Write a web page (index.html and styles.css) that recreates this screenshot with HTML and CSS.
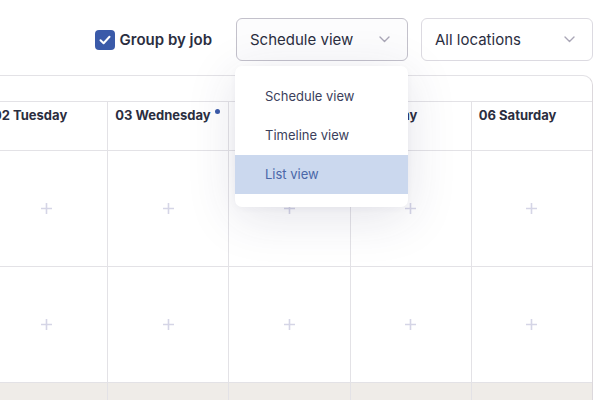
FILE: index.html
```html
<!DOCTYPE html>
<html>
<head>
<meta charset="utf-8">
<link rel="stylesheet" href="styles.css">
</head>
<body>
<div class="toolbar">
  <label class="check">
    <span class="box"><svg width="12" height="10" viewBox="0 0 12 10"><path d="M1.5 5.2 L4.6 8.2 L10.5 1.8" fill="none" stroke="#fff" stroke-width="2" stroke-linecap="round" stroke-linejoin="round"/></svg></span>
    <span class="check-text">Group by job</span>
  </label>
  <div class="select-wrap">
    <div class="select active">
      <span>Schedule view</span>
      <svg class="chev" width="11" height="7" viewBox="0 0 11 7"><path d="M1 1 L5.5 5.5 L10 1" fill="none" stroke="#a9a6b6" stroke-width="1.4" stroke-linecap="round" stroke-linejoin="round"/></svg>
    </div>
    <div class="menu">
      <div class="item">Schedule view</div>
      <div class="item">Timeline view</div>
      <div class="item selected">List view</div>
    </div>
  </div>
  <div class="select loc">
    <span>All locations</span>
    <svg class="chev" width="11" height="7" viewBox="0 0 11 7"><path d="M1 1 L5.5 5.5 L10 1" fill="none" stroke="#a9a6b6" stroke-width="1.4" stroke-linecap="round" stroke-linejoin="round"/></svg>
  </div>
</div>

<div class="calendar">
  <div class="strip"></div>
  <div class="grid">
    <div class="head">02 Tuesday</div>
    <div class="head">03 Wednesday<span class="dot"></span></div>
    <div class="head">04 Thursday</div>
    <div class="head">05 Friday</div>
    <div class="head">06 Saturday</div>

    <div class="cell"><svg class="plus" width="11" height="11" viewBox="0 0 11 11"><path d="M5.5 0 V11 M0 5.5 H11" stroke="#d5d5e6" stroke-width="1.6"/></svg></div>
    <div class="cell"><svg class="plus" width="11" height="11" viewBox="0 0 11 11"><path d="M5.5 0 V11 M0 5.5 H11" stroke="#d5d5e6" stroke-width="1.6"/></svg></div>
    <div class="cell"><svg class="plus" width="11" height="11" viewBox="0 0 11 11"><path d="M5.5 0 V11 M0 5.5 H11" stroke="#d5d5e6" stroke-width="1.6"/></svg></div>
    <div class="cell"><svg class="plus" width="11" height="11" viewBox="0 0 11 11"><path d="M5.5 0 V11 M0 5.5 H11" stroke="#d5d5e6" stroke-width="1.6"/></svg></div>
    <div class="cell"><svg class="plus" width="11" height="11" viewBox="0 0 11 11"><path d="M5.5 0 V11 M0 5.5 H11" stroke="#d5d5e6" stroke-width="1.6"/></svg></div>

    <div class="cell"><svg class="plus" width="11" height="11" viewBox="0 0 11 11"><path d="M5.5 0 V11 M0 5.5 H11" stroke="#d5d5e6" stroke-width="1.6"/></svg></div>
    <div class="cell"><svg class="plus" width="11" height="11" viewBox="0 0 11 11"><path d="M5.5 0 V11 M0 5.5 H11" stroke="#d5d5e6" stroke-width="1.6"/></svg></div>
    <div class="cell"><svg class="plus" width="11" height="11" viewBox="0 0 11 11"><path d="M5.5 0 V11 M0 5.5 H11" stroke="#d5d5e6" stroke-width="1.6"/></svg></div>
    <div class="cell"><svg class="plus" width="11" height="11" viewBox="0 0 11 11"><path d="M5.5 0 V11 M0 5.5 H11" stroke="#d5d5e6" stroke-width="1.6"/></svg></div>
    <div class="cell"><svg class="plus" width="11" height="11" viewBox="0 0 11 11"><path d="M5.5 0 V11 M0 5.5 H11" stroke="#d5d5e6" stroke-width="1.6"/></svg></div>

    <div class="foot"></div>
    <div class="foot"></div>
    <div class="foot"></div>
    <div class="foot"></div>
    <div class="foot"></div>
  </div>
</div>
</body>
</html>
```

FILE: styles.css
```css
* { box-sizing: border-box; }
html, body {
  margin: 0;
  padding: 0;
  background: #ffffff;
  overflow: hidden;
  height: 400px;
}
body {
  font-family: Inter, "Noto Sans", sans-serif;
  color: #2b2e3f;
}
.toolbar {
  display: flex;
  justify-content: flex-end;
  align-items: center;
  padding: 18px 10px 0 0;
  height: 61px;
  position: relative;
  z-index: 2;
}
.check {
  display: flex;
  align-items: center;
  gap: 5px;
  margin-right: 24px;
}
.box {
  width: 20px;
  height: 20px;
  border-radius: 4px;
  background: #3a5aa9;
  display: flex;
  align-items: center;
  justify-content: center;
}
.check-text {
  font-size: 15px;
  font-weight: 600;
  color: #2b2e3f;
}
.select-wrap {
  position: relative;
  margin-right: 13px;
}
.select {
  width: 172px;
  height: 43px;
  border: 1px solid #dcdae1;
  border-radius: 6px;
  background: #fff;
  display: flex;
  align-items: center;
  justify-content: space-between;
  padding: 0 17px 0 13px;
  font-size: 15px;
  color: #2b2e3f;
}
.select.active {
  border-color: #c3c1cb;
  background: #fcfcfd;
}
.menu {
  position: absolute;
  top: 48px;
  left: -1px;
  width: 173px;
  background: #fff;
  border-radius: 7px;
  padding: 11px 0 13px;
  box-shadow: 0 10px 50px rgba(50, 50, 90, 0.13), 0 2px 6px rgba(50, 50, 90, 0.04);
}
.item {
  height: 39px;
  line-height: 39px;
  padding-left: 30px;
  font-size: 13px;
  color: #3c3f5c;
}
.item.selected {
  background: #cbd8ee;
  color: #4a67a8;
}
.calendar {
  margin: 14px 10px 0 -15px;
  border: 1px solid #e3e2e6;
  border-right-color: #dcd8dc;
  border-radius: 0 10px 0 0;
  background: #fff;
  position: relative;
  z-index: 1;
}
.strip {
  height: 26px;
  border-bottom: 1px solid #e3e2e6;
}
.grid {
  display: grid;
  grid-template-columns: repeat(5, 1fr);
  grid-template-rows: 49px 116px 116px 17px;
}
.grid > div {
  border-left: 1px solid #e3e2e6;
}
.grid > div:nth-child(5n+1) {
  border-left: none;
}
.head {
  border-bottom: 1px solid #e3e2e6;
  padding: 4px 0 0 7px;
  font-size: 13px;
  font-weight: 700;
  line-height: 18px;
  color: #2b2e3f;
  white-space: nowrap;
}
.dot {
  display: inline-block;
  width: 5px;
  height: 5px;
  border-radius: 50%;
  background: #3a5aa9;
  margin-left: 4px;
  vertical-align: 6px;
}
.cell {
  border-bottom: 1px solid #e3e2e6;
  display: flex;
  align-items: center;
  justify-content: center;
}
.plus { display: block; }
.foot {
  background: #efece8;
}
```
